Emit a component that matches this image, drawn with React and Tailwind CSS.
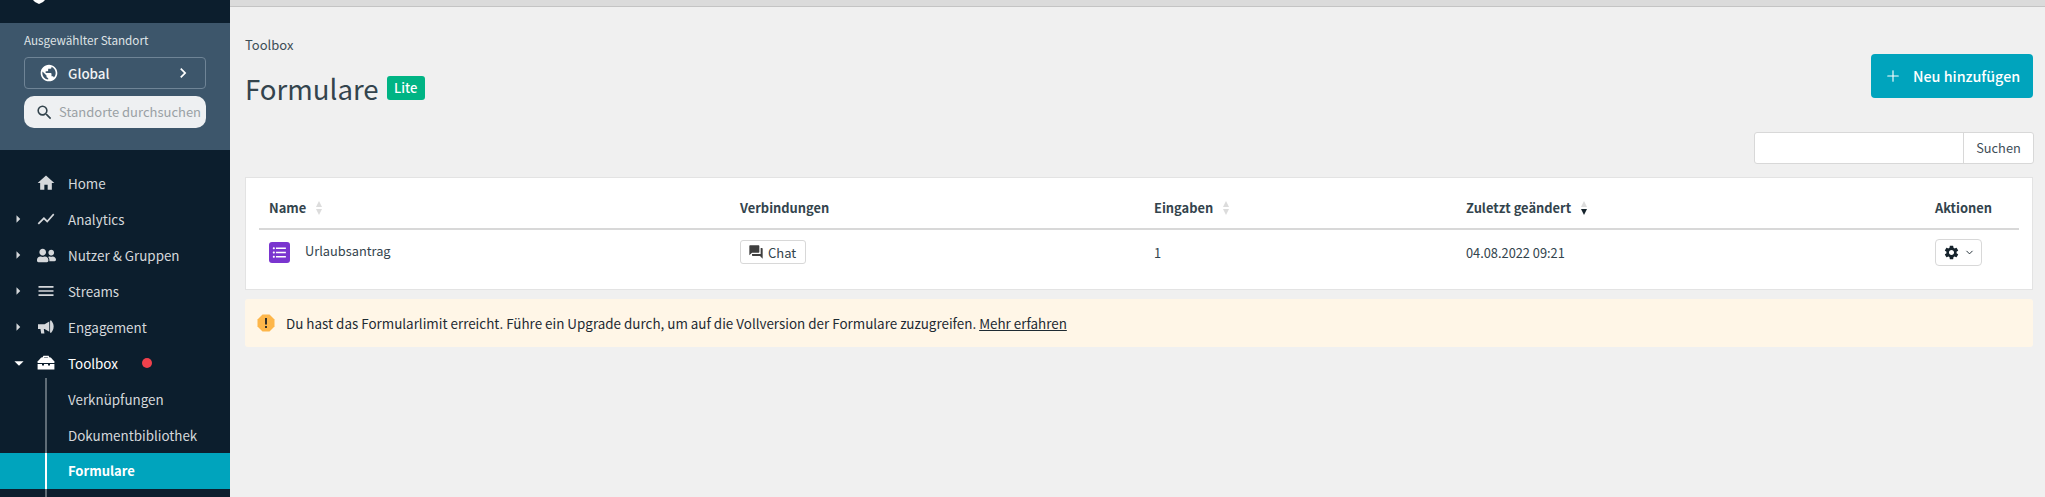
import React from "react";
import { MdHome, MdShowChart, MdMenu, MdPublic, MdChevronRight, MdSearch, MdForum, MdFormatListBulleted, MdArrowRight, MdArrowDropDown, MdSettings } from "react-icons/md";
import { FaUserFriends } from "react-icons/fa";
import { LuChevronDown, LuPlus } from "react-icons/lu";

const font = { fontFamily: '"Noto Sans CJK SC", "Noto Sans", sans-serif' };

function Toolbox({ className }) {
  return (
    <svg viewBox="0 0 18 16" className={className} fill="currentColor">
      <path d="M5.2 3 L6.4 0.8 H11.6 L12.8 3 H11.2 L10.7 2.1 H7.3 L6.8 3 Z" />
      <path d="M4.2 2.6 H13.8 L17.4 6.6 V8 H0.6 V6.6 Z" />
      <path d="M0.6 9 H5 V10.6 H7 V9 H11 V10.6 H13 V9 H17.4 V14.6 H0.6 Z" />
    </svg>
  );
}

function Horn({ className }) {
  return (
    <svg viewBox="0 0 17 15" className={className} fill="currentColor">
      <path d="M0 4 H7 L12 1 V12 L7 9.2 H6.2 L6.8 14 H3.4 L2.6 9.2 H0 Z" />
      <path d="M12.8 0 H14 C15.8 2 16.6 4 16.6 6.5 C16.6 9 15.8 11 14 13 H12.8 Z" />
    </svg>
  );
}

function NavItem({ icon: Icon, label, arrow, active, iconClass = "w-5 h-5" }) {
  return (
    <div className={`flex items-center h-9 text-[13.4px] ${active ? "text-white" : "text-[#d5d8db]"}`}>
      <div className="w-[36px] flex justify-center pl-[1px]">
        {arrow === "right" && <MdArrowRight className="w-[18px] h-[18px] ml-[-1px] text-[#d5d8db]" />}
        {arrow === "down" && <MdArrowDropDown className="w-[22px] h-[22px] text-white" />}
      </div>
      <div className="w-[20px] flex justify-center"><Icon className={iconClass} /></div>
      <span className="ml-[12px]">{label}</span>
      {active && <span className="ml-6 w-[10px] h-[10px] rounded-full bg-[#f0414c]" />}
    </div>
  );
}

function SortIcon({ active }) {
  return (
    <span className="inline-flex flex-col ml-[10px] gap-[2px]">
      <span className="w-0 h-0 border-x-[3.5px] border-x-transparent border-b-[6px] border-b-[#dcdcdc]" />
      <span className={`w-0 h-0 border-x-[3.5px] border-x-transparent border-t-[6px] ${active ? "border-t-[#16232c]" : "border-t-[#dcdcdc]"}`} />
    </span>
  );
}

function Head({ children, sort, active }) {
  return (
    <div className="flex items-center font-bold text-[12.9px] text-[#33444d]">
      {children}
      {sort && <SortIcon active={active} />}
    </div>
  );
}

export default function App() {
  return (
    <div style={font} className="flex h-[497px] w-[2045px] overflow-hidden bg-[#f0f0f0]">
      <aside className="w-[230px] shrink-0 bg-[#0c1e2d] flex flex-col">
        <div className="h-[23px] shrink-0 flex items-start pl-[33px]">
          <svg viewBox="0 0 12 4" className="w-[12px] h-[4px]" fill="#fff"><path d="M0 0 H12 L10 2 L6 4 L2 2 Z" /></svg>
        </div>
        <div className="h-[127px] shrink-0 bg-[#3d566b] px-[24px] pt-[6px]">
          <div className="text-[11.7px] leading-[22px] text-[#dfe3e6]">Ausgewählter Standort</div>
          <div className="mt-[6px] h-[32px] rounded-[4px] border border-[#6f8496] flex items-center pl-[14px] pr-[16px] text-white">
            <MdPublic className="w-[20px] h-[20px]" />
            <span className="ml-[9px] text-[13.4px] font-medium text-[#f1f3f4]">Global</span>
            <MdChevronRight className="w-[20px] h-[20px] ml-auto mr-[-4px]" />
          </div>
          <div className="mt-[7px] h-[32px] rounded-[10px] bg-[#eef0f2] flex items-center pl-[11px] overflow-hidden">
            <MdSearch className="w-[19px] h-[19px] text-[#33444d] shrink-0" />
            <span className="ml-[5px] text-[13px] text-[#9aa1a5] whitespace-nowrap">Standorte durchsuchen</span>
          </div>
        </div>
        <div className="pt-[15px]">
          <NavItem icon={MdHome} label="Home" />
          <NavItem icon={MdShowChart} label="Analytics" arrow="right" iconClass="w-[22px] h-[22px]" />
          <NavItem icon={FaUserFriends} label="Nutzer & Gruppen" arrow="right" iconClass="w-[19px] h-[19px]" />
          <NavItem icon={MdMenu} label="Streams" arrow="right" />
          <NavItem icon={Horn} label="Engagement" arrow="right" iconClass="w-[16px] h-[15px]" />
          <NavItem icon={() => <Toolbox className="w-[18px] h-[16px]" />} label="Toolbox" arrow="down" active />
          <div className="relative">
            <div className="absolute left-[45px] top-[-3px] bottom-0 w-[2px] bg-[#5f6c76]" />
            <div className="h-9 flex items-center pl-[68px] text-[13.4px] text-[#d5d8db]">Verknüpfungen</div>
            <div className="h-9 flex items-center pl-[68px] text-[13.4px] text-[#d5d8db]">Dokumentbibliothek</div>
            <div className="relative h-9 flex items-center pl-[68px] text-[13px] font-bold text-white bg-[#00a4bd]">
              <div className="absolute left-[45px] top-0 bottom-0 w-[2px] bg-white" />
              Formulare
            </div>
            <div className="h-9" />
          </div>
        </div>
      </aside>

      <main className="flex-1 min-w-0 flex flex-col">
        <div className="h-[7px] bg-[#dbdbdb] border-b border-[#c4c4c4]" />
        <div className="pl-[15px] pr-[12px]">
          <div className="pt-[27px] text-[13px] leading-[22px] text-[#3d4d56]">Toolbox</div>
          <div className="flex items-start justify-between mt-[-2px]">
            <div className="flex items-center pt-[14px]">
              <h1 className="text-[27.6px] leading-[40px] text-[#33444d]">Formulare</h1>
              <span className="ml-[8px] h-[24px] w-[38px] rounded-[3px] bg-[#00b484] text-white text-[13px] font-medium flex items-center justify-center">Lite</span>
            </div>
            <button className="w-[162px] h-[44px] rounded-[4px] bg-[#00a4bd] text-white flex items-center pl-[13px] text-[14.3px] font-medium">
              <LuPlus className="w-[18px] h-[18px] mr-[11px]" strokeWidth={1.5} />
              Neu hinzufügen
            </button>
          </div>
          <div className="flex justify-end mt-[24px]">
            <div className="w-[280px] h-[32px] rounded-[3px] bg-white border border-[#d8d8d8] flex mr-[-1px]">
              <div className="flex-1" />
              <div className="w-[70px] border-l border-[#d8d8d8] flex items-center justify-center text-[12.8px] text-[#3d4d56]">Suchen</div>
            </div>
          </div>
          <section className="mt-[13px] h-[113px] bg-white border border-[#e3e3e3] px-[13px]">
            <div className="h-[52px] pl-[10px] grid grid-cols-[471px_414px_312px_469px_1fr] items-center border-b-2 border-[#d8d8d8] pt-[10px]">
              <Head sort>Name</Head>
              <Head>Verbindungen</Head>
              <Head sort>Eingaben</Head>
              <Head sort active>Zuletzt geändert</Head>
              <Head>Aktionen</Head>
            </div>
            <div className="pl-[10px] grid grid-cols-[471px_414px_312px_469px_1fr] items-center pt-[9px] text-[12.8px] text-[#33444d]">
              <div className="flex items-center">
                <span className="w-[21px] h-[21px] rounded-[3px] bg-[#7a35cf] flex items-center justify-center text-white">
                  <MdFormatListBulleted className="w-[17px] h-[17px]" />
                </span>
                <span className="ml-[15px] mt-[-4px]">Urlaubsantrag</span>
              </div>
              <div>
                <span className="inline-flex items-center h-[24px] w-[66px] rounded-[3px] border border-[#d8d8d8] pl-[7px] text-[13px]">
                  <MdForum className="w-[16px] h-[16px] text-[#3f3f3f] mr-[4px]" />Chat
                </span>
              </div>
              <div>1</div>
              <div>04.08.2022 09:21</div>
              <div>
                <span className="inline-flex items-center h-[27px] w-[47px] rounded-[4px] border border-[#d8d8d8] pl-[7px]">
                  <MdSettings className="w-[17px] h-[17px] text-[#16232c]" />
                  <LuChevronDown className="w-[11px] h-[11px] ml-[4px] text-[#16232c]" />
                </span>
              </div>
            </div>
          </section>
          <div className="mt-[9px] h-[48px] rounded-[3px] bg-[#fff6e7] flex items-center pl-[12px] text-[13.42px] text-[#1e2a32]">
            <svg viewBox="0 0 18 18" className="w-[18px] h-[18px] shrink-0">
              <path d="M5.5 0.5 H12.5 L17.5 5.5 V12.5 L12.5 17.5 H5.5 L0.5 12.5 V5.5 Z" fill="#fdb64a" />
              <rect x="8" y="4" width="2" height="6.5" fill="#33302a" />
              <rect x="8" y="12" width="2" height="2" fill="#33302a" />
            </svg>
            <span className="ml-[11px]">Du hast das Formularlimit erreicht. Führe ein Upgrade durch, um auf die Vollversion der Formulare zuzugreifen. <span className="underline">Mehr erfahren</span></span>
          </div>
        </div>
      </main>
    </div>
  );
}
